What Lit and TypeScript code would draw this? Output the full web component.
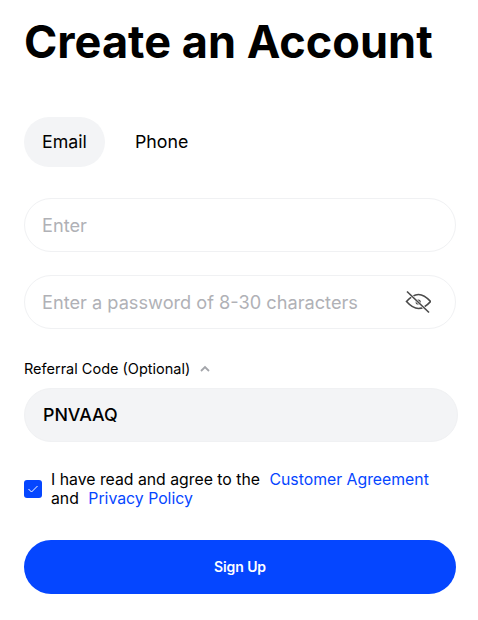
import { LitElement, html, css } from "lit";
import { customElement } from "lit/decorators.js";

@customElement("app-root")
export class AppRoot extends LitElement {
  static styles = css`
    :host { display: block; width: 478px; height: 620px; overflow: hidden; background: #fff; font-family: Inter, "Liberation Sans", sans-serif; color: #000; }
    .page { display: flex; flex-direction: column; padding: 16px 22px 0 24px; box-sizing: border-box; }
    h1 { margin: 0; font-size: 45.1px; line-height: 52px; font-weight: 700; white-space: nowrap; }
    .tabs { display: flex; gap: 12px; margin-top: 49px; }
    .tab { height: 50px; width: 81px; padding: 0 18px 2px; border-radius: 25px; display: flex; align-items: center; font-size: 17.8px; box-sizing: border-box; }
    .tab.on { background: #f3f4f6; }
    .field { height: 54px; width: 432px; box-sizing: border-box; border: 1px solid #f0f1f3; border-radius: 27px; padding: 0 17px 1px; display: flex; align-items: center; justify-content: space-between; font-size: 18.2px; color: #b0b1b6; white-space: nowrap; }
    .first { margin-top: 31px; }
    .second { margin-top: 23px; }
    .second svg { margin-right: 7px; }
    .label { display: flex; align-items: center; gap: 9px; margin-top: 30px; height: 20px; font-size: 14.5px; line-height: 20px; }
    .code { margin-top: 9px; width: 434px; height: 54px; box-sizing: border-box; background: #f3f4f6; border: 1px solid #f0f1f3; border-radius: 27px; padding: 0 18px 1px; display: flex; align-items: center; font-size: 17.8px; font-weight: 500; color: #000; }
    .agree { display: flex; align-items: center; gap: 9px; margin-top: 28px; font-size: 15.8px; line-height: 19px; }
    .box { width: 18px; height: 18px; border-radius: 3px; background: #0546ff; display: flex; align-items: center; justify-content: center; flex: none; }
    .agree a { color: #0546ff; text-decoration: none; margin-left: 5px; }
    .btn { margin-top: 32px; width: 432px; height: 54px; padding-bottom: 2px; box-sizing: border-box; border-radius: 27px; background: #0546ff; color: #fff; display: flex; align-items: center; justify-content: center; font-size: 14px; font-weight: 600; letter-spacing: -0.1px; }
  `;

  render() {
    return html`<div class="page">
      <h1>Create an Account</h1>
      <div class="tabs"><div class="tab on">Email</div><div class="tab">Phone</div></div>
      <div class="field first">Enter</div>
      <div class="field second">Enter a password of 8-30 characters
        <svg width="26" height="26" viewBox="0 0 26 26" fill="none" stroke="#4a4a4a" stroke-width="1.600">
          <path d="M1.500 12.500C6 7.500 9.500 5.500 13.500 5.500S21 7.500 25.500 12.500C21 17.500 17.500 19.500 13.500 19.500S6 17.500 1.500 12.500z"/>
          <circle cx="13.200" cy="13" r="2.600" fill="#4a4a4a" stroke="none"/>
          <path d="M2 2.500 24 23.500" stroke="#fff" stroke-width="2.800"/>
          <path d="M2 2.500 24 23.500"/>
        </svg>
      </div>
      <div class="label">Referral Code (Optional)
        <svg width="12" height="8" viewBox="0 0 12 8" fill="none" stroke="#a3a5aa" stroke-width="1.800"><path d="M2 6l4-4 4 4"/></svg>
      </div>
      <div class="code">PNVAAQ</div>
      <div class="agree">
        <div class="box"><svg width="12" height="10" viewBox="0 0 12 10" fill="none" stroke="#fff" stroke-width="1"><path d="M1.500 5l3 3 6-6"/></svg></div>
        <div>I have read and agree to the <a>Customer Agreement</a><br>and <a>Privacy Policy</a></div>
      </div>
      <div class="btn">Sign Up</div>
    </div>`;
  }
}
